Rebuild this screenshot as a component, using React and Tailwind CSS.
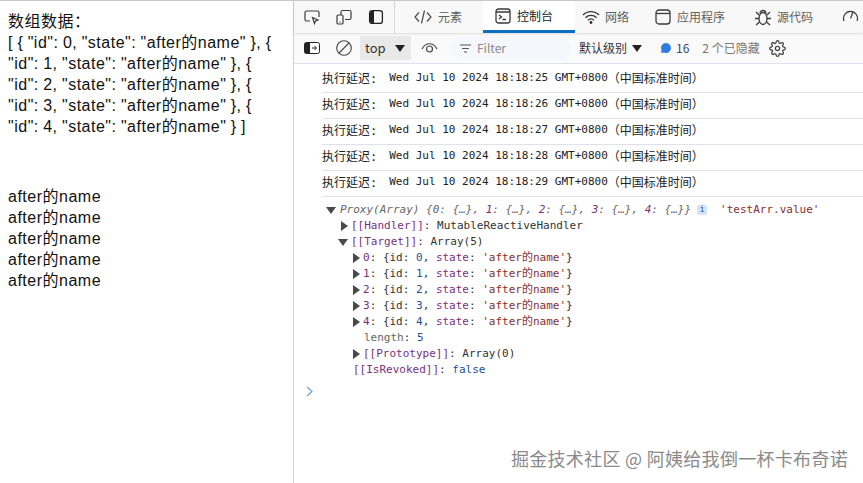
const K = ({ children }) => <span className="text-[#7b2f7d]">{children}</span>;
const S = ({ children }) => <span className="text-[#8a2d2d]">{children}</span>;
const N = ({ children }) => <span className="text-[#1c4f9c]">{children}</span>;

const Tri = ({ open }) => (
  <svg width="10" height="10" viewBox="0 0 10 10" className="shrink-0 text-[#4a4a4a]">
    {open ? <path d="M0 2h10L5 9z" fill="currentColor" /> : <path d="M2 0l7 5-7 5z" fill="currentColor" />}
  </svg>
);

const icon = "fill-none stroke-[#3a3a3a] shrink-0";

function TopTabs() {
  return (
    <div className="h-[32px] flex bg-[#f8f8f8] shadow-[0_1px_2px_rgba(0,0,0,0.12)] relative z-10 overflow-hidden">
      <div className="flex items-center pl-[10px] w-[101px] gap-[16px] border-r border-[#d8d8d8]">
        <svg width="16" height="16" viewBox="0 0 16 16" className={icon} strokeWidth="1.2">
          <path d="M6 12H2.500A1.500 1.500 0 0 1 1 10.500V3.500A1.500 1.500 0 0 1 2.500 2h11A1.500 1.500 0 0 1 15 3.500V8" />
          <path d="M8.500 8.500l2 6 1-2.500 2.500-1z" />
        </svg>
        <svg width="16" height="16" viewBox="0 0 16 16" className={icon} strokeWidth="1.2">
          <path d="M5 6V3a1.500 1.500 0 0 1 1.500-1.500h7A1.500 1.500 0 0 1 15 3v6a1.500 1.500 0 0 1-1.500 1.500H9" />
          <rect x="1" y="6" width="6" height="9" rx="1.300" />
          <path d="M3.500 13h1" />
        </svg>
        <svg width="16" height="16" viewBox="0 0 16 16" className="shrink-0">
          <rect x="1.600" y="1.600" width="12.800" height="12.800" rx="2.500" fill="none" stroke="#222" strokeWidth="1.300" />
          <path d="M4 2h2v12H4a2 2 0 0 1-2-2V4a2 2 0 0 1 2-2z" fill="#222" />
        </svg>
      </div>
      <div className="flex items-center w-[88px] pl-[19px] gap-[6px] text-[#5f5f5f]">
        <svg width="18" height="16" viewBox="0 0 18 16" className="fill-none stroke-[#4a4a4a] shrink-0" strokeWidth="1.200">
          <path d="M5 3.500L1 8l4 4.500M13 3.500l4 4.500-4 4.500M10.500 1.500l-3 13" />
        </svg>
        <span>元素</span>
      </div>
      <div className="flex items-center w-[92px] pl-[12px] gap-[6px] bg-white border-b-[3px] border-[#0a6fc2] h-[32px] text-[#222]">
        <svg width="16" height="16" viewBox="0 0 16 16" className={icon} strokeWidth="1.300">
          <rect x="1" y="1" width="14" height="14" rx="2.500" />
          <path d="M1 4h14M4 7l2.500 2L4 11M7.500 11.500H11" />
        </svg>
        <span>控制台</span>
      </div>
      <div className="flex items-center w-[80px] pl-[7px] gap-[5px] text-[#5f5f5f]">
        <svg width="18" height="16" viewBox="0 0 18 16" className="fill-none stroke-[#333] shrink-0" strokeWidth="1.300">
          <path d="M1 6c4.500-4.500 11.500-4.500 16 0M3.500 8.700c3-3 8-3 11 0M6 11.200c1.700-1.500 4.300-1.500 6 0" />
          <circle cx="9" cy="13.500" r="0.800" fill="#333" />
        </svg>
        <span>网络</span>
      </div>
      <div className="flex items-center w-[99px] gap-[6px] text-[#5f5f5f]">
        <svg width="16" height="16" viewBox="0 0 16 16" className={icon} strokeWidth="1.300">
          <rect x="1" y="1" width="14" height="14" rx="3" />
          <path d="M1 4.500h14" />
        </svg>
        <span>应用程序</span>
      </div>
      <div className="flex items-center w-[88px] gap-[5px] text-[#5f5f5f]">
        <svg width="18" height="17" viewBox="0 0 18 17" className={icon} strokeWidth="1.300">
          <ellipse cx="9" cy="9.500" rx="4" ry="6" />
          <path d="M6 4.500c0-4 6-4 6 0M5 6L2 3M13 6l3-3M5 9.500H1M13 9.500h4M5.500 13L2 16M12.500 13l3.500 3" />
        </svg>
        <span>源代码</span>
      </div>
      <svg width="17" height="16" viewBox="0 0 17 16" className={`${icon} self-center`} strokeWidth="1.200">
        <path d="M2 12a7 7 0 1 1 13 0M8.500 9.500L11 3" />
      </svg>
    </div>
  );
}

function FilterBar() {
  return (
    <div className="h-[31px] flex items-center bg-[#fafafa] border-b border-[#dfe1ec] text-[12px] relative">
      <svg width="16" height="12" viewBox="0 0 16 12" className="ml-[10px] shrink-0">
        <rect x="0.500" y="0.500" width="15" height="11" rx="2" fill="#fff" stroke="#222" />
        <path d="M2 0.500h4v11H2a1.500 1.500 0 0 1-1.500-1.500V2A1.500 1.500 0 0 1 2 0.500z" fill="#222" />
        <path d="M8 6h4M10.500 4l2 2-2 2" fill="none" stroke="#222" />
      </svg>
      <svg width="16" height="16" viewBox="0 0 16 16" className="ml-[16px] fill-none stroke-[#444] shrink-0" strokeWidth="1.100">
        <circle cx="8" cy="8" r="7.300" />
        <path d="M3 13L13 3" />
      </svg>
      <div className="ml-[8px] w-[51px] h-[24px] bg-[#e9e9e9] flex items-center pl-[5px] text-[#333] text-[13px]">
        top
        <svg width="10" height="7" viewBox="0 0 10 7" className="ml-[9px]"><path d="M0 0h10L5 7z" fill="#222" /></svg>
      </div>
      <svg width="17" height="12" viewBox="0 0 17 12" className="ml-[10px] fill-none stroke-[#444] shrink-0" strokeWidth="1.200">
        <path d="M1 7c3.500-7 11.500-7 15 0" />
        <circle cx="8.500" cy="7" r="3" />
      </svg>
      <div className="ml-[13px] w-[120px] h-[24px] rounded-[12px] bg-[#f5f7fc] flex items-center pl-[9px] gap-[6px] text-[#8a8a8a]">
        <svg width="11" height="9" viewBox="0 0 11 9" className="fill-none stroke-[#555] shrink-0" strokeWidth="1.200">
          <path d="M0 1h11M2 4.500h7M4 8h3" />
        </svg>
        Filter
      </div>
      <span className="ml-[8px] text-[#333]">默认级别</span>
      <svg width="10" height="7" viewBox="0 0 10 7" className="ml-[5px]"><path d="M0 0h10L5 7z" fill="#222" /></svg>
      <svg width="10" height="10" viewBox="0 0 10 10" className="ml-[19px]">
        <path d="M5 0a5 5 0 1 1-2 9.600L0 10l.5-3A5 5 0 0 1 5 0z" fill="#2f7de1" />
      </svg>
      <span className="ml-[5px] text-[#3a4a6a]">16</span>
      <span className="ml-[13px] text-[#777]">2 个已隐藏</span>
      <svg width="17" height="17" viewBox="0 0 24 24" className="ml-[9px] fill-none stroke-[#444] shrink-0" strokeWidth="1.800">
        <circle cx="12" cy="12" r="3" />
        <path d="M19.400 15a1.650 1.650 0 0 0 .33 1.820l.06.06a2 2 0 1 1-2.830 2.830l-.06-.06a1.650 1.650 0 0 0-2.820 1.170V21a2 2 0 1 1-4 0v-.09a1.650 1.650 0 0 0-2.850-1.130l-.06.06a2 2 0 1 1-2.830-2.830l.06-.06A1.650 1.650 0 0 0 3.090 14H3a2 2 0 1 1 0-4h.09a1.650 1.650 0 0 0 1.130-2.850l-.06-.06a2 2 0 1 1 2.830-2.830l.06.06A1.650 1.650 0 0 0 10 3.090V3a2 2 0 1 1 4 0v.09a1.650 1.650 0 0 0 2.850 1.130l.06-.06a2 2 0 1 1 2.830 2.830l-.06.06A1.650 1.650 0 0 0 20.910 10H21a2 2 0 1 1 0 4h-.09a1.650 1.650 0 0 0-1.510 1z" />
      </svg>
    </div>
  );
}

const secs = ["25", "26", "27", "28", "29"];

function ArrItem({ i }) {
  return (
    <div className="h-[16px] flex items-center pl-[57px] gap-[2px]">
      <Tri />
      <span>
        <K>{i}</K>: {"{"}id: <N>{i}</N>, <K>state</K>: <S>'after的name'</S>{"}"}
      </span>
    </div>
  );
}

function Console() {
  return (
    <div className="flex-1 bg-white pt-[3px] font-['DejaVu_Sans_Mono','Noto_Sans_CJK_SC',monospace] text-[11px] text-[#333]">
      {secs.map((s) => (
        <div key={s} className="ml-[28px] h-[26px] pb-[2px] flex items-center border-b border-[#dfe1ec] whitespace-pre text-[#222]">
          <span className="text-[12px]">执行延迟:</span>
          <span className="ml-[12px]">Wed Jul 10 2024 18:18:{s} GMT+0800</span>
          <span className="text-[12px]">（中国标准时间）</span>
        </div>
      ))}
      <div className="pt-[5px] whitespace-pre">
        <div className="h-[16px] flex items-center pl-[32px] gap-[4px]">
          <Tri open />
          <span className="italic text-[#666]">
            Proxy(Array) {"{"}0: {"{…}"}, <K>1</K>: {"{…}"}, <K>2</K>: {"{…}"}, <K>3</K>: {"{…}"}, <K>4</K>: {"{…}"}{"}"}
          </span>
          <span className="ml-[2px] w-[10px] h-[10px] rounded-[2px] bg-[#d6e4fa] text-[#1c4f9c] text-[8px] leading-[10px] text-center">i</span>
          <span className="ml-[9px] text-[#8a2d2d]">'testArr.value'</span>
        </div>
        <div className="h-[16px] flex items-center pl-[45px] gap-[2px]">
          <Tri />
          <span><K>[[Handler]]</K>: MutableReactiveHandler</span>
        </div>
        <div className="h-[16px] flex items-center pl-[44px] gap-[3px]">
          <Tri open />
          <span><K>[[Target]]</K>: Array(5)</span>
        </div>
        {[0, 1, 2, 3, 4].map((i) => <ArrItem key={i} i={i} />)}
        <div className="h-[16px] flex items-center pl-[70px]">
          <span className="text-[#666]">length</span>: <N>5</N>
        </div>
        <div className="h-[16px] flex items-center pl-[57px] gap-[2px]">
          <Tri />
          <span><K>[[Prototype]]</K>: Array(0)</span>
        </div>
        <div className="h-[16px] flex items-center pl-[59px]">
          <span><K>[[IsRevoked]]</K>: <N>false</N></span>
        </div>
        <div className="pl-[12px] pt-[8px]">
          <svg width="7" height="11" viewBox="0 0 7 11" className="fill-none stroke-[#6a9fe0]" strokeWidth="1.200">
            <path d="M1 1l5 4.500L1 10" />
          </svg>
        </div>
      </div>
    </div>
  );
}

const arrLines = [
  '[ { "id": 0, "state": "after的name" }, {',
  '"id": 1, "state": "after的name" }, {',
  '"id": 2, "state": "after的name" }, {',
  '"id": 3, "state": "after的name" }, {',
  '"id": 4, "state": "after的name" } ]',
];

export default function App() {
  return (
    <div className="relative w-[863px] h-[483px] overflow-hidden bg-white flex border-t border-[#c8c8c8] font-['Noto_Sans_CJK_SC',sans-serif] text-[12px]">
      <div className="w-[293px] shrink-0 pt-[10px] pl-[8px] font-['Liberation_Sans','Noto_Sans_CJK_SC',sans-serif] text-[16px] leading-[21px] tracking-[0.5px] [word-spacing:-0.5px] text-[#111] whitespace-pre">
        <div>数组数据：</div>
        {arrLines.map((l) => <div key={l}>{l}</div>)}
        <div className="mt-[49px]">
          {secs.map((s) => <div key={s}>after的name</div>)}
        </div>
      </div>
      <div className="flex-1 border-l border-[#cfcfcf] flex flex-col min-w-0">
        <TopTabs />
        <FilterBar />
        <Console />
      </div>
      <div className="absolute right-[15px] bottom-[13px] text-[18px] tracking-[0.3px] leading-[24px] text-[#8a8a8a] [text-shadow:1px_1px_1px_rgba(255,255,255,0.9)] font-['Noto_Sans_CJK_SC',sans-serif]">
        掘金技术社区 @ 阿姨给我倒一杯卡布奇诺
      </div>
    </div>
  );
}
